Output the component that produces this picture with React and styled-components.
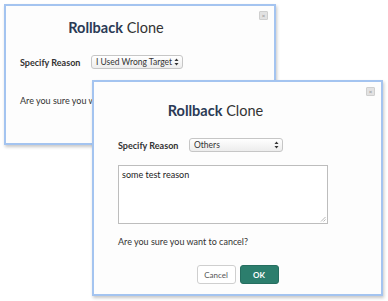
import React from "react";
import styled, { createGlobalStyle } from "styled-components";

const GlobalStyle = createGlobalStyle`
  html, body {
    margin: 0;
    padding: 0;
    background: #ffffff;
    font-family: Lato, "Open Sans", sans-serif;
    color: #333;
  }
`;

const Desktop = styled.div`
  position: relative;
  width: 388px;
  height: 301px;
  overflow: hidden;
  background: #fff;
`;

const Dialog = styled.div`
  position: absolute;
  left: ${(p) => p.left}px;
  top: ${(p) => p.top}px;
  width: ${(p) => p.width}px;
  height: ${(p) => p.height}px;
  box-sizing: border-box;
  background: #fdfdfd;
  border: 2px solid #a4c4f0;
  box-shadow: 1px 2px 3px rgba(0, 0, 0, 0.22);
  padding: ${(p) => p.pad};
  display: flex;
  flex-direction: column;
`;

const CloseBox = styled.div`
  position: absolute;
  right: 6px;
  top: 5px;
  width: 7px;
  height: 7px;
  background: #e2e2e2;
  border: 1px solid #cfcfcf;
  border-radius: 1px;
  color: #888;
  font-size: 6px;
  line-height: 7px;
  text-align: center;
`;

const Title = styled.div`
  text-align: center;
  padding-right: ${(p) => p.shift}px;
  font-size: 14.5px;
  color: #333;
  height: 20px;
  line-height: 20px;
  margin-bottom: ${(p) => p.gap}px;
`;

const TitleStrong = styled.span`
  font-weight: 700;
  color: #2b3a55;
`;

const Row = styled.div`
  display: flex;
  align-items: center;
  height: 14px;
  margin-bottom: ${(p) => p.gap}px;
`;

const Label = styled.div`
  width: 71px;
  flex: none;
  font-size: 9px;
  font-weight: 700;
  color: #333;
`;

const Select = styled.div`
  box-sizing: border-box;
  width: ${(p) => p.width}px;
  height: 14px;
  border: 1px solid #c6c6c6;
  border-radius: 3px;
  background: linear-gradient(#ffffff, #ededed);
  display: flex;
  align-items: center;
  justify-content: space-between;
  padding: 0 3px 0 4px;
  font-size: 8.5px;
  white-space: nowrap;
  color: #333;
`;

const Arrows = styled.svg`
  width: 5px;
  height: 8px;
  flex: none;
`;

const TextArea = styled.div`
  box-sizing: border-box;
  position: relative;
  width: 210px;
  height: 59px;
  border: 1px solid #bdbdbd;
  background: #fff;
  padding: 3px 3px;
  font-size: 9px;
  color: #222;
  margin-bottom: 12px;
`;

const Grip = styled.svg`
  position: absolute;
  right: 1px;
  bottom: 1px;
  width: 6px;
  height: 6px;
`;

const Question = styled.div`
  font-size: 9px;
  color: #333;
  height: 12px;
  line-height: 12px;
  margin-bottom: ${(p) => p.gap}px;
`;

const Buttons = styled.div`
  display: flex;
  justify-content: center;
  gap: 4px;
`;

const Button = styled.div`
  box-sizing: border-box;
  width: 39px;
  height: 19px;
  border-radius: 3px;
  display: flex;
  align-items: center;
  justify-content: center;
  font-size: 8px;
  font-weight: ${(p) => (p.primary ? 700 : 400)};
  background: ${(p) => (p.primary ? "#2c7e6d" : "#ffffff")};
  color: ${(p) => (p.primary ? "#ffffff" : "#555")};
  border: 1px solid ${(p) => (p.primary ? "#266e60" : "#cfcfcf")};
`;

function UpDown() {
  return (
    <Arrows viewBox="0 0 5 8">
      <path d="M2.5 0.5 L4.5 3 L0.5 3 Z" fill="#333" />
      <path d="M2.5 7.5 L4.5 5 L0.5 5 Z" fill="#333" />
    </Arrows>
  );
}

export default function App() {
  return (
    <>
      <GlobalStyle />
      <Desktop>
        <Dialog left={4} top={4} width={272} height={141} pad="12px 14px 0 14px">
          <CloseBox>×</CloseBox>
          <Title shift={48} gap={17}>
            <TitleStrong>Rollback</TitleStrong> Clone
          </Title>
          <Row gap={26}>
            <Label>Specify Reason</Label>
            <Select width={92}>
              <span>I Used Wrong Target</span>
              <UpDown />
            </Select>
          </Row>
          <Question gap={0}>Are you sure you want to cancel?</Question>
        </Dialog>

        <Dialog left={92} top={80} width={291} height={216} pad="19px 24px 0 24px">
          <CloseBox>×</CloseBox>
          <Title shift={44} gap={17}>
            <TitleStrong>Rollback</TitleStrong> Clone
          </Title>
          <Row gap={13}>
            <Label>Specify Reason</Label>
            <Select width={94}>
              <span>Others</span>
              <UpDown />
            </Select>
          </Row>
          <TextArea>
            some test reason
            <Grip viewBox="0 0 6 6">
              <path d="M5.5 1 L1 5.5 M5.5 3.5 L3.5 5.5" stroke="#999" strokeWidth="0.7" />
            </Grip>
          </TextArea>
          <Question gap={17}>Are you sure you want to cancel?</Question>
          <Buttons>
            <Button>Cancel</Button>
            <Button primary>OK</Button>
          </Buttons>
        </Dialog>
      </Desktop>
    </>
  );
}
